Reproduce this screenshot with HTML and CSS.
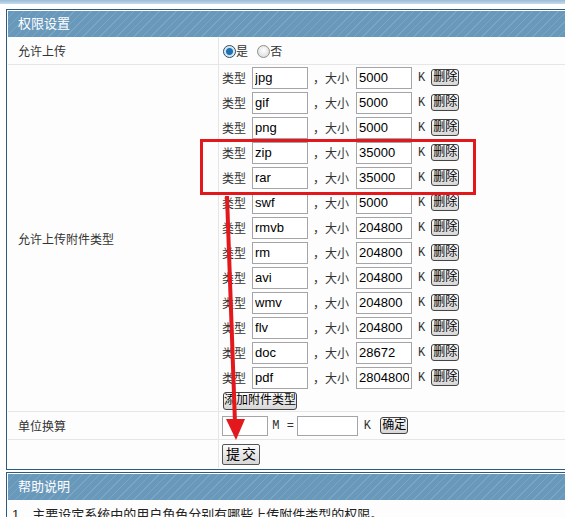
FILE: index.html
```html
<!DOCTYPE html>
<html lang="zh-CN">
<head>
  <meta charset="UTF-8" />
  <title>权限设置</title>
  <link rel="stylesheet" href="styles.css">
</head>
<body>
  <div class="topbar"></div>

  <div class="box">
    <div class="box-title">权限设置</div>
    <table class="form-table">
      <tr class="row-upload">
        <td class="label">允许上传</td>
        <td class="field">
          <span class="radio checked"></span><span class="radio-text">是</span>
          <span class="radio"></span><span class="radio-text">否</span>
        </td>
      </tr>
      <tr>
        <td class="label">允许上传附件类型</td>
        <td class="field types">
          <div id="typeList"></div>
          <div class="add-line"><button class="btn">添加附件类型</button></div>
        </td>
      </tr>
      <tr class="row-unit">
        <td class="label">单位换算</td>
        <td class="field">
          <input type="text" class="txt unit-m" />
          <span class="mono eq">M =</span>
          <input type="text" class="txt unit-k" />
          <span class="mono k">K</span>
          <button class="btn">确定</button>
        </td>
      </tr>
      <tr class="row-submit">
        <td class="label"></td>
        <td class="field"><button class="btn submit">提交</button></td>
      </tr>
    </table>
  </div>

  <div class="box help">
    <div class="box-title">帮助说明</div>
    <div class="help-text">1、主要设定系统中的用户角色分别有哪些上传附件类型的权限。</div>
  </div>

  <!-- 标注：红框和箭头 -->
  <svg class="marks" width="565" height="517" viewBox="0 0 565 517">
    <rect x="201.5" y="140.5" width="273" height="53" fill="none" stroke="#e3181c" stroke-width="3" />
    <line x1="227" y1="196" x2="235" y2="423" stroke="#e3181c" stroke-width="4" />
    <polygon points="226,419 245,419 236,440" fill="#e3181c" />
  </svg>

  <script>
    // 附件类型及大小(K)
    const types = [
      ["jpg", "5000"], ["gif", "5000"], ["png", "5000"], ["zip", "35000"],
      ["rar", "35000"], ["swf", "5000"], ["rmvb", "204800"], ["rm", "204800"],
      ["avi", "204800"], ["wmv", "204800"], ["flv", "204800"], ["doc", "28672"],
      ["pdf", "2804800"]
    ];

    const list = document.getElementById("typeList");
    types.forEach(([ext, size]) => {
      const line = document.createElement("div");
      line.className = "type-line";
      line.innerHTML =
        '<span class="cap">类型</span>' +
        '<input type="text" class="txt ext" value="' + ext + '" />' +
        '<span class="comma">，</span><span class="cap">大小</span>' +
        '<input type="text" class="txt size" value="' + size + '" />' +
        '<span class="mono k">K</span>' +
        '<button class="btn">删除</button>';
      list.appendChild(line);
    });
  </script>
</body>
</html>
```

FILE: styles.css
```css
html, body {
  margin: 0;
  overflow: hidden;
}
body {
  font-family: "Liberation Sans", "Noto Sans CJK SC", sans-serif;
  font-size: 12px;
  color: #333;
  background-color: #fff;
  position: relative;
  width: 565px;
  height: 517px;
}
.topbar {
  height: 4px;
  background: linear-gradient(#98bcd8, #c6dbeb);
  margin-bottom: 5px;
}
.box {
  margin-left: 6px;
  width: 600px;
  border: 1px solid #2c5b80;
  padding: 1px;
  background-color: #fdfdfd;
}
.box.help {
  margin-top: 2px;
}
.box-title {
  height: 26px;
  line-height: 26px;
  padding-left: 10px;
  color: #fff;
  font-size: 13px;
  background-color: #6898ba;
  background-image: repeating-linear-gradient(-45deg, #6898ba 0, #6898ba 5px, #7aa5c3 5px, #7aa5c3 6px);
}
.form-table {
  width: 100%;
  border-collapse: collapse;
}
.form-table td {
  border-bottom: 1px solid #e6e6e6;
  padding: 0;
}
.form-table tr:last-child td {
  border-bottom: none;
}
.label {
  width: 200px;
  padding-left: 10px !important;
  border-right: 1px solid #e6e6e6;
  vertical-align: middle;
}
.field {
  padding-left: 3px !important;
  vertical-align: middle;
}
.row-upload td,
.row-unit td {
  height: 27px;
}
.row-submit td {
  height: 28px;
}
.type-line {
  display: flex;
  align-items: center;
  height: 25px;
}
.comma {
  margin-left: 5px;
  width: 12px;
}
.txt {
  box-sizing: border-box;
  height: 22px;
  border: 1px solid #a5a5a8;
  padding: 0 2px;
  font-family: "Liberation Sans", sans-serif;
  font-size: 13px;
  color: #000;
  background: #fff;
  outline: none;
}
.txt.ext {
  width: 56px;
  margin-left: 6px;
}
.txt.size {
  width: 56px;
  margin-left: 7px;
}
.mono {
  font-family: "Liberation Mono", monospace;
  font-size: 12px;
  color: #333;
}
.k {
  margin-left: 6px;
  margin-right: 6px;
}
.btn {
  font-family: "Liberation Sans", "Noto Sans CJK SC", sans-serif;
  font-size: 12px;
  color: #000;
  height: 17px;
  line-height: 15px;
  padding: 0 1px;
  border: 1px solid #444;
  border-radius: 3px;
  background: linear-gradient(#fbfbfb, #d6d6d6);
  cursor: pointer;
}
.add-line {
  height: 21px;
  display: flex;
  align-items: center;
  padding-left: 1px;
}
.add-line .btn {
  height: 18px;
  padding: 0;
}
.radio {
  display: inline-block;
  width: 11px;
  height: 11px;
  border-radius: 50%;
  border: 1px solid #8e8f8f;
  background: radial-gradient(circle at 50% 40%, #fff, #d4d4d4);
  vertical-align: -2px;
  margin-left: 1px;
}
.radio.checked {
  border-color: #2b4b66;
  background: radial-gradient(circle at 50% 50%, #1e72b4 0, #1e72b4 3px, #cde3f3 4px, #e8f2f9 6px);
}
.radio-text {
  margin-right: 5px;
}
.txt.unit-m {
  width: 46px;
  height: 20px;
  vertical-align: middle;
}
.txt.unit-k {
  width: 61px;
  height: 20px;
  vertical-align: middle;
}
.eq {
  margin: 0 0 0 1px;
}
.row-unit .k {
  margin-left: 2px;
  margin-right: 6px;
}
.submit {
  font-size: 14px;
  letter-spacing: 2px;
  height: 21px;
  line-height: 18px;
  padding: 0 1px 0 3px;
  border-radius: 2px;
  border-color: #555;
}
.help-text {
  padding: 4px 0 0 4px;
  font-size: 13px;
  color: #222;
}
.marks {
  position: absolute;
  left: 0;
  top: 0;
  pointer-events: none;
}
```
